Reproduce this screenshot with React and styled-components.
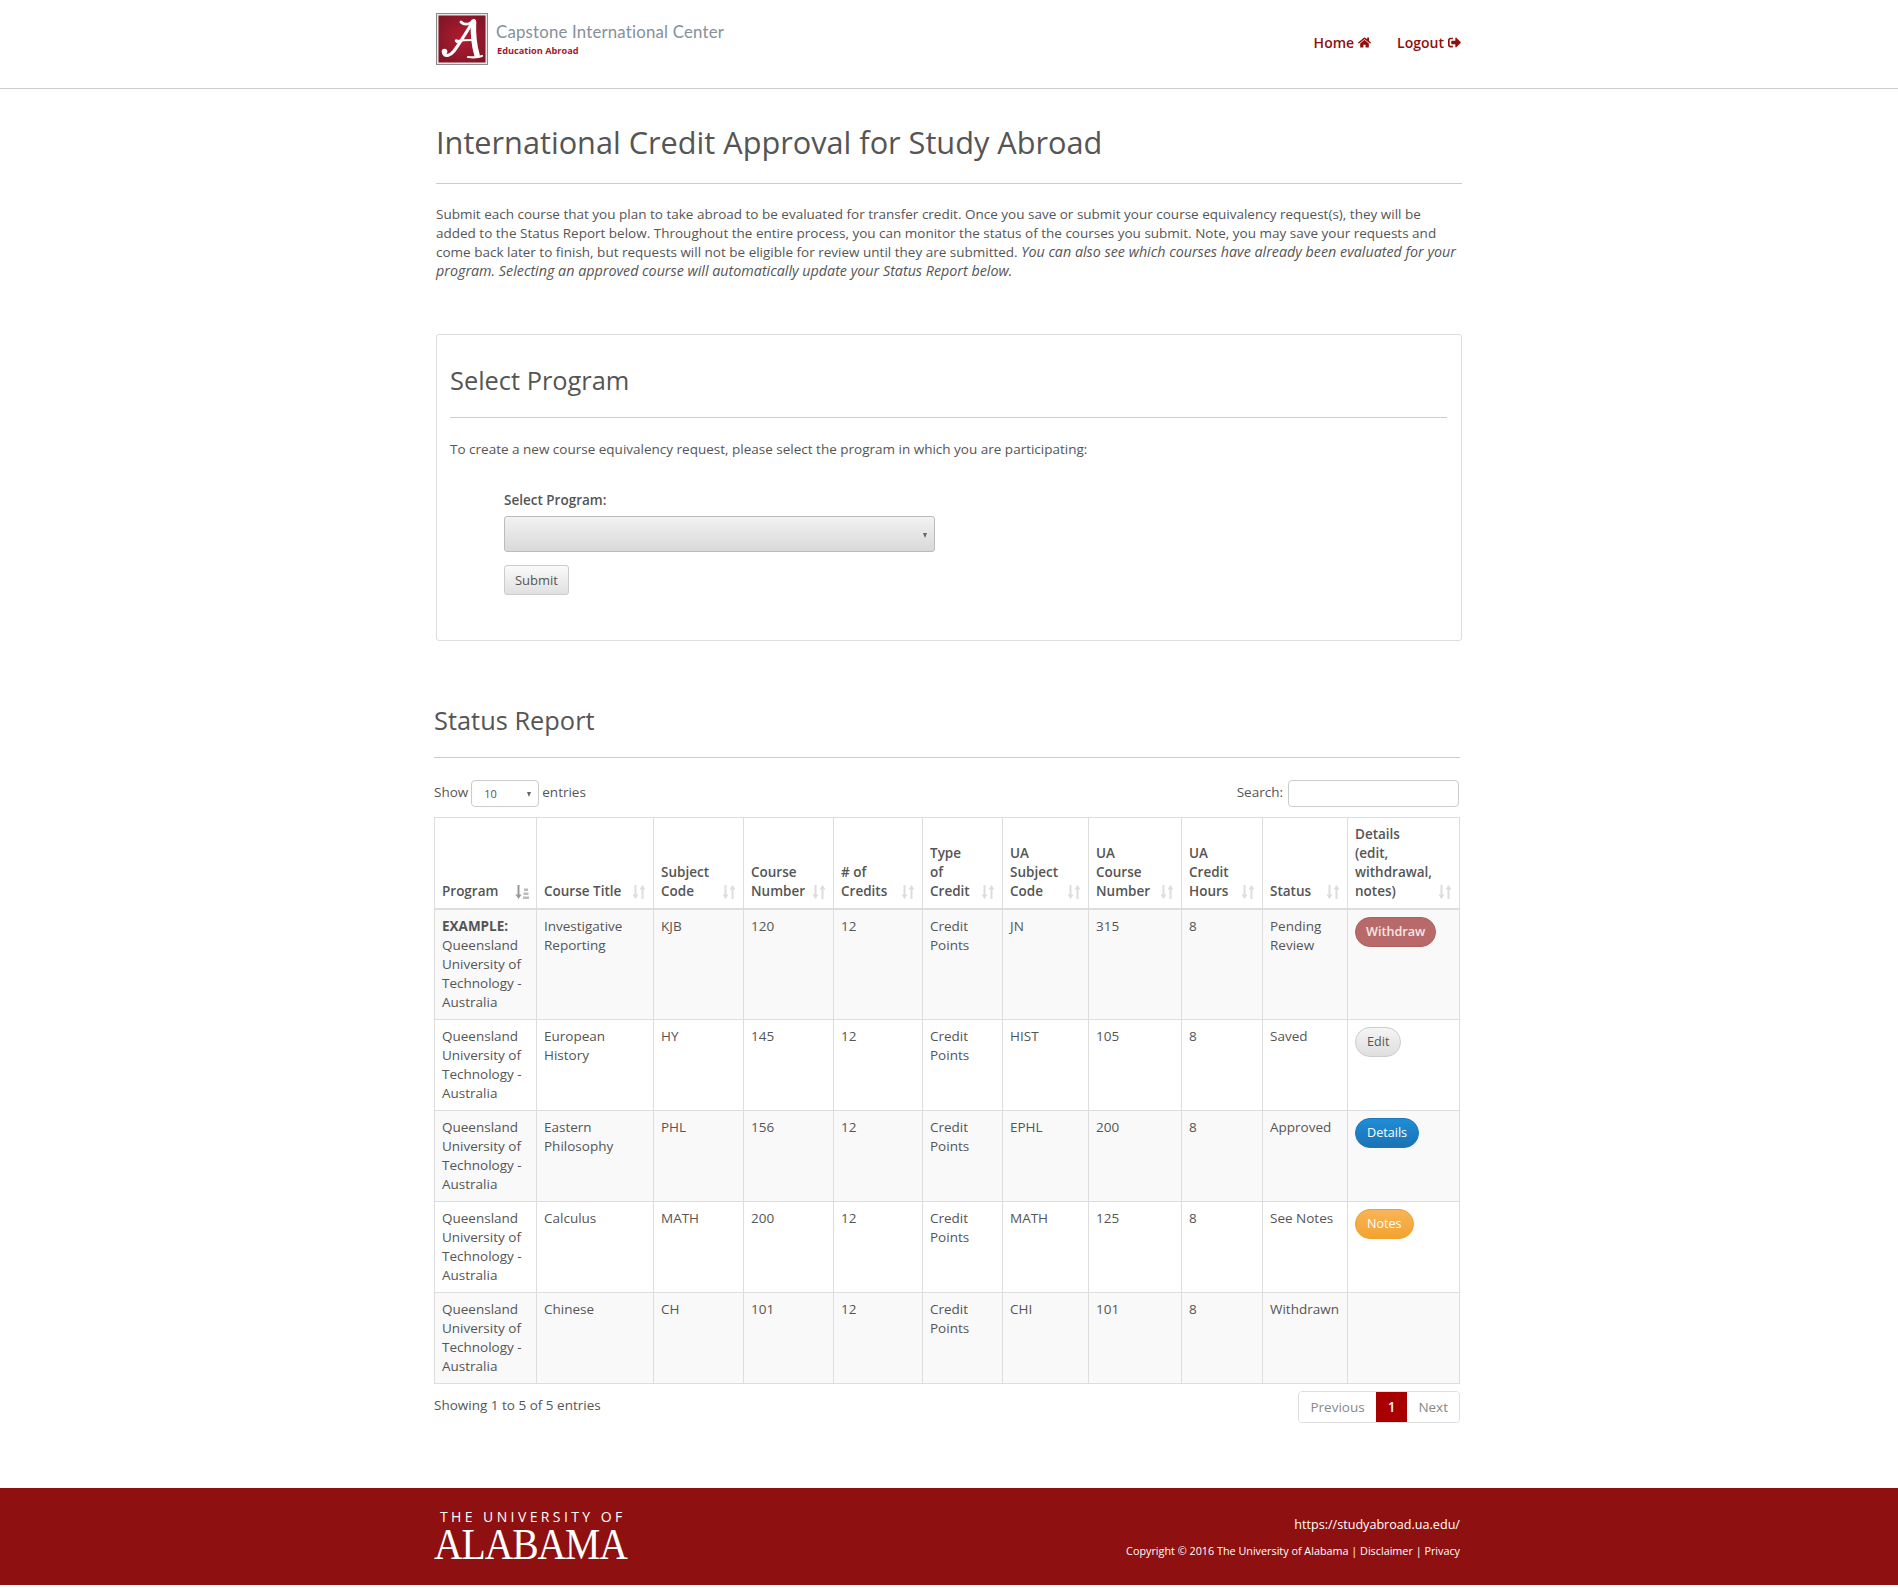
import React from "react";
import styled, { createGlobalStyle } from "styled-components";
import { FaHome, FaSignOutAlt } from "react-icons/fa";

const Global = createGlobalStyle`
  html, body { margin: 0; padding: 0; background: #fff; }
  body { font-family: "Open Sans", "Liberation Sans", sans-serif; font-size: 13.5px; line-height: 19px; color: #555; }
  * { box-sizing: border-box; }
`;

const Page = styled.div`
  width: 1898px; height: 1588px; display: flex; flex-direction: column;
`;
const Header = styled.header`
  height: 89px; border-bottom: 1px solid #ccc; flex: none;
`;
const HeaderInner = styled.div`
  width: 1026px; margin: 0 auto; height: 88px; display: flex; justify-content: space-between;
`;
const Brand = styled.div`
  display: flex; align-items: flex-start; padding-top: 13px; gap: 8px;
`;
const BrandText = styled.div`
  display: flex; flex-direction: column; padding-top: 9px;
`;
const BrandName = styled.div`
  font-size: 16.8px; line-height: 20px; color: #84909a; font-family: "Lato", "Open Sans", sans-serif; letter-spacing: .2px;
`;
const BrandSub = styled.div`
  font-size: 9.2px; line-height: 12px; font-weight: 700; color: #a6192e; margin: 3px 0 0 1px;
`;
const Nav = styled.nav`
  display: flex; gap: 26px; padding-top: 33px; padding-right: 1px;
`;
const NavLink = styled.a`
  display: flex; align-items: center; gap: 4px; color: #8f0e0e; font-weight: 600; font-size: 14px; line-height: 19px; height: 19px;
  svg { width: 13px; height: 13px; }
`;
const Main = styled.main`
  width: 1030px; margin: 0 auto; flex: 1;
`;
const Title = styled.h1`
  margin: 0 0 0 2px; font-size: 30.7px; line-height: 40px; font-weight: 400; color: #555; padding: 33px 0 21px; border-bottom: 1px solid #ccc; width: 1026px;
`;
const Intro = styled.p`
  margin: 21px 0 0 2px; width: 1026px; height: 129px;
  em { font-style: italic; font-size: 14.3px; line-height: 17px; }
`;
const Panel = styled.section`
  margin-left: 2px; width: 1026px; height: 307px; border: 1px solid #ddd; border-radius: 3px; padding: 0 14px 0 13px;
`;
const PanelTitle = styled.h2`
  margin: 0; padding: 29px 0 20px; font-size: 25.4px; line-height: 33px; font-weight: 400; color: #555; border-bottom: 1px solid #ccc;
`;
const PanelText = styled.p`
  margin: 22px 0 0;
`;
const Form = styled.form`
  margin: 32px 0 0 54px; display: flex; flex-direction: column; align-items: flex-start;
`;
const FieldLabel = styled.label`
  font-weight: 600; display: block; margin-bottom: 6px;
`;
const FakeSelect = styled.div`
  position: relative; width: 431px; height: 36px; border: 1px solid #bbb; border-radius: 3px;
  background: linear-gradient(#f2f2f2, #d9d9d9);
`;
const Caret = styled.span`
  position: absolute; top: ${p => p.$top}px; right: ${p => p.$right}px;
  width: 0; height: 0; border-left: 2.5px solid transparent; border-right: 2.5px solid transparent; border-top: 5px solid #666;
`;
const SubmitBtn = styled.button`
  margin-top: 13px; width: 65px; height: 30px; font: 400 13px/19px "Open Sans", sans-serif; color: #555;
  border: 1px solid #ccc; border-radius: 3px; background: linear-gradient(#fafafa, #e0e0e0); padding: 0;
`;
const Status = styled.section`
  margin-top: 61px;
`;
const StatusTitle = styled.h2`
  margin: 0; padding: 0 0 19px; width: 1026px; font-size: 25.4px; line-height: 36px; font-weight: 400; color: #555; border-bottom: 1px solid #ccc;
`;
const Controls = styled.div`
  margin-top: 22px; width: 1026px; height: 27px; display: flex; justify-content: space-between; align-items: center; padding-right: 1px;
`;
const ControlGroup = styled.div`
  display: flex; align-items: center; gap: 3px;
`;
const ControlText = styled.span`
  margin-bottom: 2px;
`;
const Length = styled.div`
  position: relative; width: 68px; height: 27px; border: 1px solid #ccc; border-radius: 4px; font-size: 11px; line-height: 25px; padding-left: 12px;
`;
const SearchInput = styled.input`
  width: 171px; height: 27px; border: 1px solid #ccc; border-radius: 4px; margin-left: 2px; background: #fff; padding: 0 6px;
`;
const Table = styled.table`
  margin-top: 10px; width: 1025px; table-layout: fixed; border-collapse: collapse; border: 1px solid #ddd;
`;
const Col = styled.col`
  width: ${p => p.$w}px;
`;
const Th = styled.th`
  position: relative; border: 1px solid #ddd; border-bottom-width: 2px; padding: 7px 27px 7px 7px; vertical-align: bottom; text-align: left; font-weight: 600; color: #555;
`;
const SortIcon = styled.svg`
  position: absolute; right: 7px; bottom: 9px; width: 14px; height: 14px;
`;
const Tr = styled.tr`
  background: ${p => (p.$odd ? "#f9f9f9" : "#fff")};
`;
const Td = styled.td`
  border: 1px solid #ddd; padding: 7px; vertical-align: top; overflow-wrap: break-word;
  strong { font-weight: 700; }
`;
const Pill = styled.a`
  display: inline-block; height: 30px; line-height: 28px; padding: 0 ${p => p.$pad}px; border-radius: 15px; font-size: 12.6px; font-weight: ${p => p.$weight || 400};
  border: 1px solid ${p => p.$border}; color: ${p => p.$color}; background: ${p => p.$bg};
  vertical-align: top;
`;
const TableFoot = styled.div`
  width: 1026px; display: flex; justify-content: space-between; align-items: flex-start; margin-top: 7px;
`;
const Info = styled.div`
  margin-top: 5px;
`;
const Pager = styled.div`
  display: flex; height: 32px; border: 1px solid #ddd; border-radius: 4px; overflow: hidden;
`;
const PageItem = styled.a`
  padding: 0 ${p => p.$pad}px; color: ${p => (p.$active ? "#fff" : "#888")}; background: ${p => (p.$active ? "#a80000" : "#fff")}; font-weight: ${p => (p.$active ? 600 : 400)};
  height: 32px; margin-top: -1px; line-height: 32px;
`;
const Footer = styled.footer`
  flex: none; height: 97px; margin-bottom: 3px; background: #8f1010; color: #fff;
`;
const FooterInner = styled.div`
  width: 1030px; margin: 0 auto; display: flex; justify-content: space-between; padding: 21px 4px 0 0; height: 97px;
`;
const Wordmark = styled.div`
  display: flex; flex-direction: column; align-items: flex-start; color: #fff;
`;
const WordTop = styled.div`
  font-size: 14px; line-height: 16px; letter-spacing: 3.4px; font-weight: 500; padding-left: 6px;
`;
const WordMain = styled.div`
  font-family: "Liberation Serif", serif; font-size: 44px; line-height: 38px; letter-spacing: -1.2px; margin-top: 1px;
  transform: scaleX(.9); transform-origin: left center;
`;
const FooterRight = styled.div`
  display: flex; flex-direction: column; align-items: flex-end;
`;
const FooterUrl = styled.div`
  font-size: 12.6px; line-height: 19px; margin-top: 6px; font-weight: 400;
`;
const Copyright = styled.div`
  font-size: 10.8px; line-height: 15px; margin-top: 9px; font-weight: 400;
`;

const widths = [102, 117, 90, 90, 89, 80, 86, 93, 81, 85, 112];
const heads = ["Program", "Course Title", "Subject Code", "Course Number", "# of Credits", "Type of Credit", "UA Subject Code", "UA Course Number", "UA Credit Hours", "Status", "Details (edit, withdrawal, notes)"];
const Q = "Queensland University of Technology - Australia";

const btns = {
  withdraw: { $pad: 10, $bg: "#b86a6a", $border: "#b05f5f", $color: "#f5e6e6", $weight: 600 },
  edit: { $pad: 11, $bg: "linear-gradient(#f5f5f5,#dedede)", $border: "#ccc", $color: "#555" },
  details: { $pad: 11, $bg: "linear-gradient(#1f8dd6,#1a72b5)", $border: "#1b78bd", $color: "#fff" },
  notes: { $pad: 11, $bg: "linear-gradient(#f8b458,#f3a330)", $border: "#f0a030", $color: "#fff" },
};
const rows = [
  { ex: true, t: "Investigative Reporting", s: "KJB", n: "120", u: "JN", un: "315", st: "Pending Review", b: "withdraw", l: "Withdraw" },
  { t: "European History", s: "HY", n: "145", u: "HIST", un: "105", st: "Saved", b: "edit", l: "Edit" },
  { t: "Eastern Philosophy", s: "PHL", n: "156", u: "EPHL", un: "200", st: "Approved", b: "details", l: "Details" },
  { t: "Calculus", s: "MATH", n: "200", u: "MATH", un: "125", st: "See Notes", b: "notes", l: "Notes" },
  { t: "Chinese", s: "CH", n: "101", u: "CHI", un: "101", st: "Withdrawn" },
];

const Sort = ({ active }) => (
  <SortIcon viewBox="0 0 14 14">
    <path d="M2.500 0h2v9.500h2L3.500 14 .5 9.500h2z" fill={active ? "#999" : "#ddd"} />
    {active ? (
      <path d="M8 11.500h6V14H8zM8.500 7.500h5V10h-5zM9 3.500h4V6H9z" fill="#bbb" />
    ) : (
      <path d="M9.500 14h2V4.500h2L10.500 0l-3 4.500h2z" fill="#ddd" />
    )}
  </SortIcon>
);

const Logo = () => (
  <svg width="52" height="52" viewBox="0 0 52 52">
    <defs>
      <radialGradient id="lg" cx="50%" cy="50%" r="65%">
        <stop offset="0" stopColor="#b01c30" />
        <stop offset="1" stopColor="#7f1526" />
      </radialGradient>
    </defs>
    <rect x="0.5" y="0.5" width="51" height="51" fill="#e8e8e8" stroke="#8a8a8a" />
    <rect x="2.500" y="2.500" width="47" height="47" fill="url(#lg)" />
    <g fill="none" stroke="#fff" strokeLinecap="round">
      <path d="M36 10C30 20 24 30 18 38 14 43 9 44 7.500 40" strokeWidth="3.200" />
      <path d="M25 9C28 12 33 12 38 7.500" strokeWidth="3" />
      <path d="M37.500 9C37 20 38 32 41 42" strokeWidth="5.500" />
      <path d="M32 44C37 44.500 42 44.500 46 43" strokeWidth="2.200" />
      <path d="M21 29C19 27 20 27 22 28 27 27 32 27 37 27" strokeWidth="2.200" />
    </g>
    <circle cx="8.500" cy="38.500" r="2.800" fill="#fff" />
  </svg>
);

export default function App() {
  return (
    <Page>
      <Global />
      <Header>
        <HeaderInner>
          <Brand>
            <Logo />
            <BrandText>
              <BrandName>Capstone International Center</BrandName>
              <BrandSub>Education Abroad</BrandSub>
            </BrandText>
          </Brand>
          <Nav>
            <NavLink>Home <FaHome /></NavLink>
            <NavLink>Logout <FaSignOutAlt /></NavLink>
          </Nav>
        </HeaderInner>
      </Header>
      <Main>
        <Title>International Credit Approval for Study Abroad</Title>
        <Intro>
          Submit each course that you plan to take abroad to be evaluated for transfer credit. Once you save or submit your course equivalency request(s), they will be added to the Status Report below. Throughout the entire process, you can monitor the status of the courses you submit. Note, you may save your requests and come back later to finish, but requests will not be eligible for review until they are submitted. <em>You can also see which courses have already been evaluated for your program. Selecting an approved course will automatically update your Status Report below.</em>
        </Intro>
        <Panel>
          <PanelTitle>Select Program</PanelTitle>
          <PanelText>To create a new course equivalency request, please select the program in which you are participating:</PanelText>
          <Form>
            <FieldLabel>Select Program:</FieldLabel>
            <FakeSelect><Caret $top={16} $right={7} /></FakeSelect>
            <SubmitBtn type="button">Submit</SubmitBtn>
          </Form>
        </Panel>
        <Status>
          <StatusTitle>Status Report</StatusTitle>
          <Controls>
            <ControlGroup>
              <ControlText>Show</ControlText>
              <Length>10<Caret $top={11} $right={7} /></Length>
              <ControlText>entries</ControlText>
            </ControlGroup>
            <ControlGroup>
              <ControlText>Search:</ControlText>
              <SearchInput />
            </ControlGroup>
          </Controls>
          <Table>
            <colgroup>{widths.map((w, i) => <Col key={i} $w={w} />)}</colgroup>
            <thead>
              <tr>
                {heads.map((h, i) => <Th key={h}>{h}<Sort active={i === 0} /></Th>)}
              </tr>
            </thead>
            <tbody>
              {rows.map((r, i) => (
                <Tr key={i} $odd={i % 2 === 0}>
                  <Td>{r.ex && <><strong>EXAMPLE:</strong><br /></>}{Q}</Td>
                  <Td>{r.t}</Td>
                  <Td>{r.s}</Td>
                  <Td>{r.n}</Td>
                  <Td>12</Td>
                  <Td>Credit Points</Td>
                  <Td>{r.u}</Td>
                  <Td>{r.un}</Td>
                  <Td>8</Td>
                  <Td>{r.st}</Td>
                  <Td>{r.b && <Pill {...btns[r.b]}>{r.l}</Pill>}</Td>
                </Tr>
              ))}
            </tbody>
          </Table>
          <TableFoot>
            <Info>Showing 1 to 5 of 5 entries</Info>
            <Pager>
              <PageItem $pad={11}>Previous</PageItem>
              <PageItem $pad={12} $active>1</PageItem>
              <PageItem $pad={11}>Next</PageItem>
            </Pager>
          </TableFoot>
        </Status>
      </Main>
      <Footer>
        <FooterInner>
          <Wordmark>
            <WordTop>THE UNIVERSITY OF</WordTop>
            <WordMain>ALABAMA</WordMain>
          </Wordmark>
          <FooterRight>
            <FooterUrl>https://studyabroad.ua.edu/</FooterUrl>
            <Copyright>Copyright © 2016 The University of Alabama | Disclaimer | Privacy</Copyright>
          </FooterRight>
        </FooterInner>
      </Footer>
    </Page>
  );
}
